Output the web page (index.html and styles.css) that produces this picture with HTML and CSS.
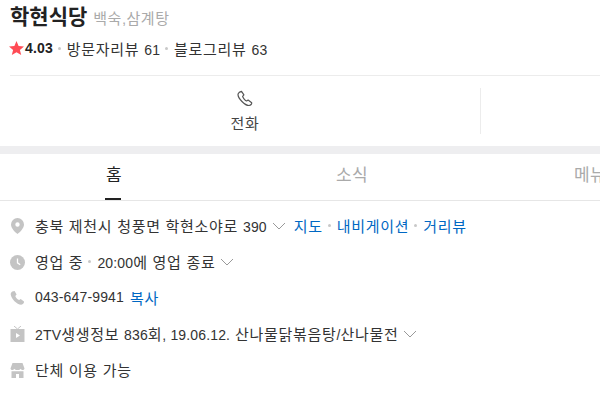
FILE: index.html
```html
<!DOCTYPE html>
<html lang="ko">
<head>
  <meta charset="UTF-8" />
  <title>학현식당</title>
  <link rel="stylesheet" href="styles.css">
</head>
<body>

  <div class="head">
    <div class="title-row">
      <h1 class="name">학현식당</h1>
      <span class="category">백숙,삼계탕</span>
    </div>
    <div class="stat-row">
      <svg class="star" width="15" height="14" viewBox="0 0 15 14"><path fill="#ff4b55" d="M7.5 0l2.1 4.9 5.4.5-4.1 3.5 1.300 5.100-4.700-2.800-4.700 2.800 1.300-5.100L0 5.400l5.400-.5z"/></svg>
      <b class="score num">4.03</b>
      <i class="dot"></i>
      <span>방문자리뷰 <span class="num">61</span></span>
      <i class="dot"></i>
      <span>블로그리뷰 <span class="num">63</span></span>
    </div>
  </div>

  <div class="actions">
    <div class="action">
      <svg width="18" height="18" viewBox="0 0 18 18"><path fill="none" stroke="#555" stroke-width="1.2" stroke-linejoin="round" d="M3.200 2.400l2.300-1.100 2.400 3.600-1.300 1.400c.3 1.400 2.600 4.300 4 4.700l1.500-1 3.600 2.800c.2 1-.9 2.600-2.600 2.700C8.700 15.700 2.200 8.300 2 4.600c0-.8.500-1.700 1.200-2.200z"/></svg>
      <span>전화</span>
    </div>
    <div class="action action-empty"></div>
  </div>

  <div class="band"></div>

  <div class="tabs">
    <div class="tab tab-on">홈</div>
    <div class="tab">소식</div>
    <div class="tab">메뉴</div>
  </div>

  <ul class="info">
    <li>
      <svg class="ico" width="14" height="16" viewBox="0 0 14 16"><path fill="#c4c4c4" fill-rule="evenodd" d="M7 0a6.500 6.500 0 0 1 6.500 6.500C13.500 10.500 9 14.500 7 16 5 14.500.5 10.500.5 6.500A6.500 6.500 0 0 1 7 0zm0 4.300a2.200 2.200 0 1 0 0 4.400 2.200 2.200 0 0 0 0-4.400z"/></svg>
      <span>충북 제천시 청풍면 학현소야로 <span class="num">390</span></span>
      <svg class="chev" width="14" height="8" viewBox="0 0 14 8"><path fill="none" stroke="#999" d="M1 1l6 6 6-6"/></svg>
      <a class="link first-link">지도</a><i class="dot"></i><a class="link">내비게이션</a><i class="dot"></i><a class="link">거리뷰</a>
    </li>
    <li>
      <svg class="ico" width="15" height="15" viewBox="0 0 15 15"><circle cx="7.500" cy="7.500" r="7.500" fill="#c4c4c4"/><path fill="none" stroke="#fff" stroke-width="1.300" d="M7.500 3.500v4.300l2.700 2"/></svg>
      <span>영업 중</span><i class="dot"></i><span><span class="num">20:00</span>에 영업 종료</span>
      <svg class="chev" width="14" height="8" viewBox="0 0 14 8"><path fill="none" stroke="#999" d="M1 1l6 6 6-6"/></svg>
    </li>
    <li>
      <svg class="ico" width="14" height="14" viewBox="0 0 14 14"><path fill="#c4c4c4" d="M1.800.6L4.100 0l2 3.500-1.300 1.400c.4 1.500 2.300 3.700 3.900 4.200l1.500-1 3.300 2.400c.3 1.200-.9 3.200-2.800 3.200C6.500 13.700.5 7.400.2 3.400.1 2.200.9 1.100 1.800.6z"/></svg>
      <span class="num">043-647-9941</span>
      <a class="link copy-link">복사</a>
    </li>
    <li>
      <svg class="ico" width="14" height="16" viewBox="0 0 14 16"><path fill="#c4c4c4" d="M0 3h14v13H0z"/><path fill="none" stroke="#c4c4c4" d="M3.500 0l3.500 3 3.500-3"/><path fill="#fff" d="M5.500 7l4 2.500-4 2.500z"/></svg>
      <span><span class="num">2TV</span>생생정보 <span class="num">836</span>회<span class="num">, 19.06.12.</span> 산나물닭볶음탕<span class="num">/</span>산나물전</span>
      <svg class="chev chev-tight" width="14" height="8" viewBox="0 0 14 8"><path fill="none" stroke="#999" d="M1 1l6 6 6-6"/></svg>
    </li>
    <li>
      <svg class="ico" width="14" height="15" viewBox="0 0 14 15"><path fill="#c4c4c4" d="M2 0h10l2 5.500c0 .8-.9 1.500-1.700 1.500-.8 0-1.800-.5-2.100-1.300C9.800 6.500 8.800 7 7 7s-2.800-.5-3.200-1.300C3.500 6.500 2.500 7 1.700 7 .9 7 0 6.300 0 5.500zM1 8.200h12V15H8.500v-4h-3v4H1z"/></svg>
      <span>단체 이용 가능</span>
    </li>
  </ul>

</body>
</html>
```

FILE: styles.css
```css
html, body {
  margin: 0;
  height: 100%;
  overflow: hidden;
  background-color: white;
  color: #333;
  font-family: "Liberation Sans", "Noto Sans CJK KR", sans-serif;
  font-size: 15px;
  letter-spacing: 0.7px;
}
.num {
  font-size: 14px;
  letter-spacing: 0.15px;
}
.head {
  padding: 2px 10px 0;
  height: 75px;
  box-sizing: border-box;
}
.title-row {
  display: flex;
  align-items: baseline;
  gap: 6px;
  height: 30px;
  line-height: 30px;
}
.name {
  margin: 0;
  font-size: 21px;
  font-weight: bold;
  letter-spacing: 0;
  color: #222;
}
.category {
  color: #aaa;
  letter-spacing: 0.5px;
}
.stat-row {
  display: flex;
  align-items: center;
  height: 20px;
  margin-top: 6px;
}
.star {
  margin-left: -1px;
  margin-right: 1px;
}
.score {
  color: #222;
}
.dot {
  display: inline-block;
  width: 3px;
  height: 3px;
  margin: 0 6px 0 5px;
  border-radius: 50%;
  background-color: #c8c8c8;
  flex: none;
}
.actions {
  display: flex;
  margin-left: 10px;
  height: 71px;
  padding-top: 12px;
  box-sizing: border-box;
  border-top: 1px solid #ececec;
}
.action {
  flex: none;
  width: 471px;
  height: 46px;
  display: flex;
  flex-direction: column;
  align-items: center;
  gap: 7px;
  padding-top: 2px;
  box-sizing: border-box;
  border-right: 1px solid #ececec;
  color: #444;
  line-height: 18px;
}
.action-empty {
  width: 100px;
  border-right: none;
}
.band {
  height: 8px;
  background-color: #eeeef0;
}
.tabs {
  display: flex;
  gap: 10px;
  height: 47px;
  box-sizing: border-box;
  overflow: hidden;
  border-bottom: 1px solid #e6e6e6;
}
.tab {
  flex: none;
  width: 228px;
  text-align: center;
  line-height: 44px;
  font-size: 17px;
  letter-spacing: 0.3px;
  color: #aaa;
  box-sizing: border-box;
}
.tab-on {
  color: #222;
  position: relative;
}
.tab-on::after {
  content: "";
  position: absolute;
  left: 105px;
  bottom: 0;
  width: 16px;
  height: 2px;
  background-color: #222;
}
.info {
  list-style: none;
  margin: 0;
  padding: 7px 0 0 10px;
}
.info li {
  display: flex;
  align-items: center;
  height: 36px;
  box-sizing: border-box;
  padding-bottom: 2px;
  white-space: nowrap;
}
.ico {
  width: 15px;
  margin-right: 10px;
  margin-top: 2px;
  flex: none;
}
.chev {
  margin-left: 5px;
  margin-top: 2px;
}
.chev-tight {
  margin-left: 4px;
}
.link {
  color: #0068c3;
}
.first-link {
  margin-left: 8px;
}
.copy-link {
  margin-left: 6px;
}
```
